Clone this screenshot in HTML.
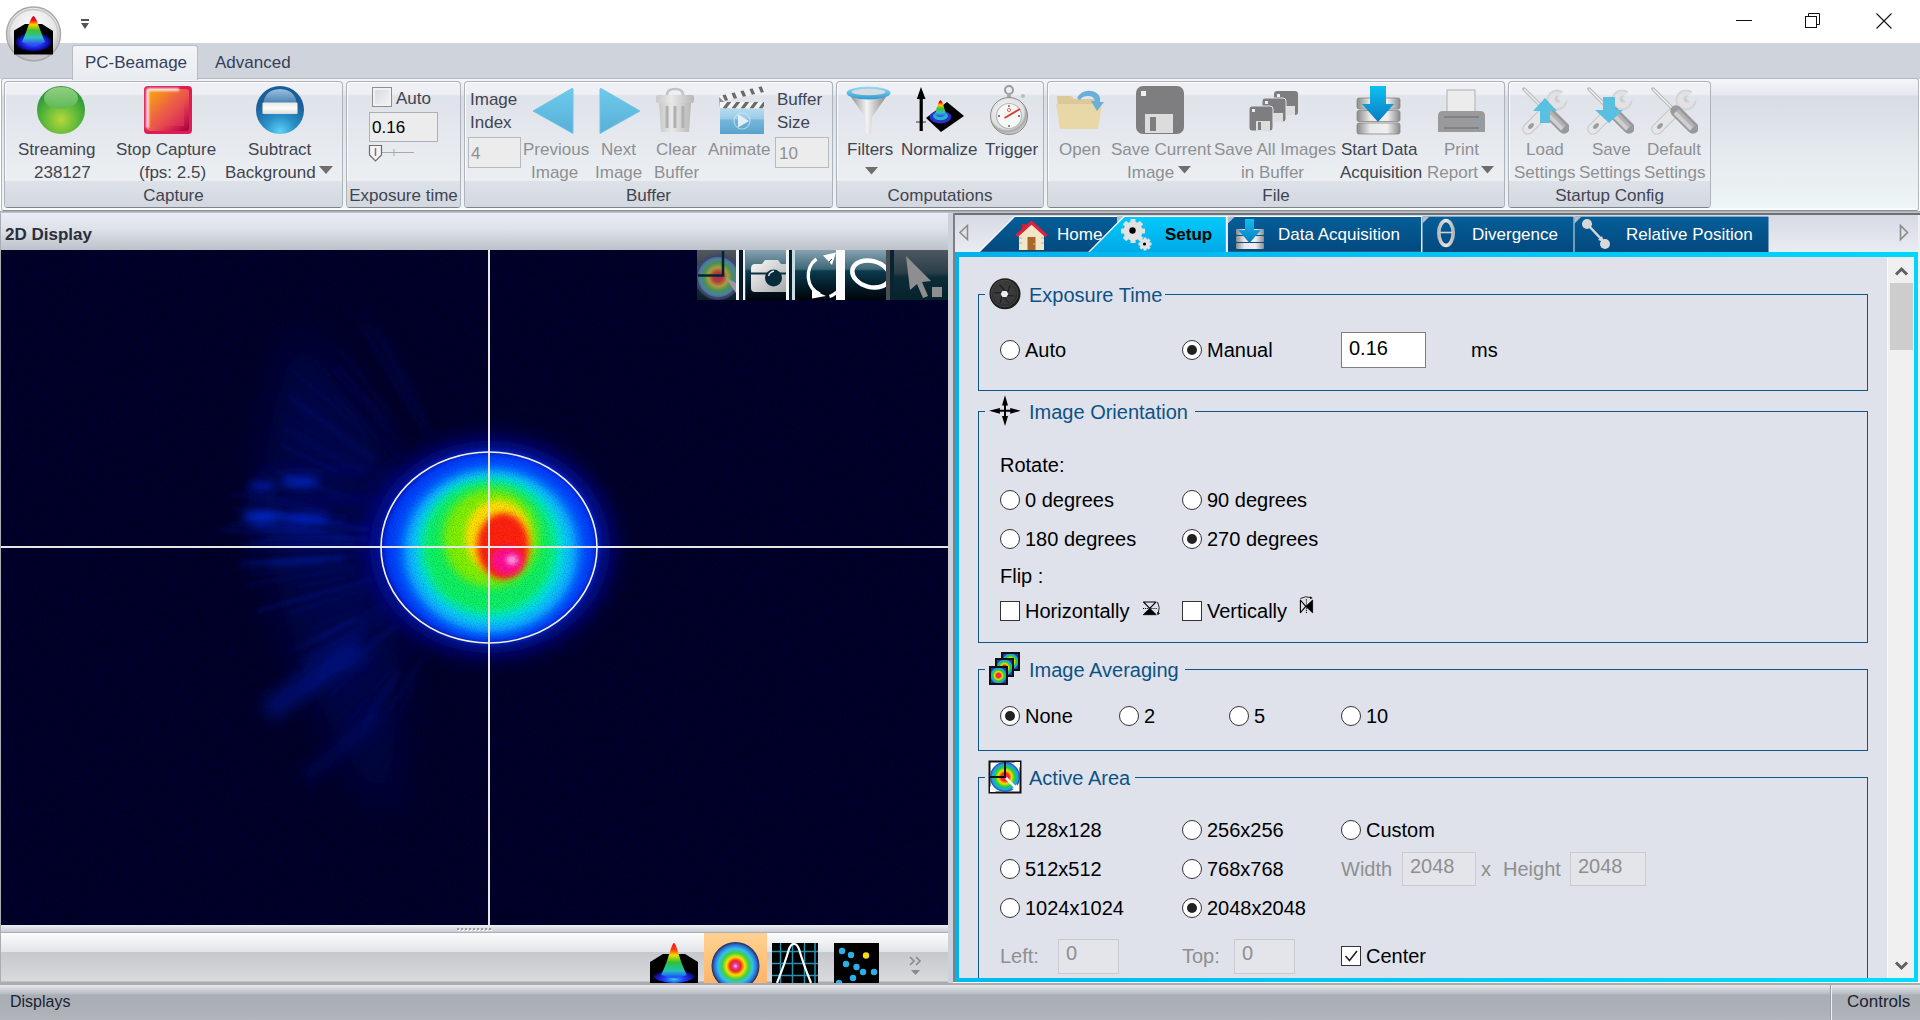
<!DOCTYPE html>
<html><head><meta charset="utf-8">
<style>
*{box-sizing:border-box;margin:0;padding:0}
html,body{width:1920px;height:1020px;overflow:hidden;background:#fff;font-family:"Liberation Sans",sans-serif;color:#3f4550}
.a{position:absolute}
.t{position:absolute;white-space:nowrap;font-size:17px;line-height:20px}
#title{left:0;top:0;width:1920px;height:43px;background:#fff}
#tabstrip{left:0;top:43px;width:1920px;height:36px;background:#cfd3dc}
#ribbon{left:1px;top:78px;width:1918px;height:133px;background:linear-gradient(#f4f6f9 0,#e4e8ee 16px,#d7dce5 17px,#e4e9ee 70px,#eef5f5 129px,#fff 130px,#fff 131px);border:1px solid #b4b8be;border-bottom-color:#8a8e96;border-radius:3px}
.grp{position:absolute;top:81px;height:127px;border:1px solid #aeb2ba;border-bottom-color:#7e8288;border-radius:4px;background:linear-gradient(#eef0f5 0px,#eef0f5 12px,#dfe3ea 14px,#e6e9ee 60px,#ecefF2 100px);box-shadow:inset 1px 1px 0 #fafbfc}
.grp .lbl{position:absolute;left:0;right:0;bottom:0;height:26px;padding-top:3px;background:linear-gradient(#dde1e8,#d3d7df);text-align:center;font-size:17px;line-height:24px;color:#3f4550;border-radius:0 0 3px 3px}
.dis{color:#8e9094}
</style></head><body>
<div id="title" class="a"></div>
<div id="tabstrip" class="a"></div>
<div id="ribbon" class="a"></div>
<!-- title bar content -->
<svg class="a" style="left:0;top:0" width="70" height="70" viewBox="0 0 70 70">
<defs>
<radialGradient id="lgc" cx="0.5" cy="0.35" r="0.6"><stop offset="0" stop-color="#ffffff"/><stop offset="0.7" stop-color="#e4e4e4"/><stop offset="1" stop-color="#bdbdbd"/></radialGradient>
<radialGradient id="cone" cx="0.5" cy="0.5" r="0.5"><stop offset="0" stop-color="#30c8d8"/><stop offset="0.4" stop-color="#2a40ff"/><stop offset="0.8" stop-color="#1010b0"/><stop offset="1" stop-color="#000"/></radialGradient>
<linearGradient id="conek" x1="0" y1="0" x2="0" y2="1"><stop offset="0" stop-color="#c00040"/><stop offset="0.15" stop-color="#ff1010"/><stop offset="0.3" stop-color="#ffd000"/><stop offset="0.5" stop-color="#40c030"/><stop offset="0.75" stop-color="#30c0c0"/><stop offset="1" stop-color="#3040ff"/></linearGradient>
</defs>
<circle cx="33.5" cy="34" r="27" fill="url(#lgc)" stroke="#a8a8a8" stroke-width="1.4"/>
<circle cx="33.5" cy="34" r="24.5" fill="none" stroke="#c8c8c8" stroke-width="1.5"/>
<path d="M14 30.5 L25 24 L42 24 L53 31 L53 54.5 L14 54.5 Z" fill="#000"/>
<ellipse cx="33.5" cy="42" rx="19" ry="10" fill="url(#cone)"/>
<path d="M33.5 16 C30.5 17 28 28 22 42 Q33.5 48 45 42 C39 28 36.5 17 33.5 16 Z" fill="url(#conek)"/>
</svg>
<svg class="a" style="left:78px;top:16px" width="14" height="16"><rect x="3" y="3" width="8" height="2" fill="#555"/><path d="M3 7 L11 7 L7 13 Z" fill="#555"/></svg>
<div class="a" style="left:1736px;top:20px;width:16px;height:1px;background:#111"></div>
<svg class="a" style="left:1803px;top:11px" width="20" height="20"><rect x="2.5" y="5.5" width="11" height="11" fill="none" stroke="#111" stroke-width="1"/><path d="M5.5 5.5 V2.5 H16.5 V13.5 H13.5" fill="none" stroke="#111" stroke-width="1"/></svg>
<svg class="a" style="left:1874px;top:11px" width="20" height="20"><path d="M2.5 2.5 L17.5 17.5 M17.5 2.5 L2.5 17.5" stroke="#111" stroke-width="1.1"/></svg>
<!-- ribbon tabs -->
<div class="a" style="left:72px;top:45px;width:126px;height:35px;background:linear-gradient(#f3f5f8,#e8ebf0);border:1px solid #b8bcc4;border-bottom:none;border-radius:3px 3px 0 0"></div>
<div class="t" style="left:85px;top:53px;color:#34405a">PC-Beamage</div>
<div class="t" style="left:215px;top:53px;color:#34405a">Advanced</div>

<div class="grp" style="left:4px;width:339px"><div class="lbl">Capture</div></div>
<div class="grp" style="left:346px;width:115px"><div class="lbl">Exposure time</div></div>
<div class="grp" style="left:464px;width:369px"><div class="lbl">Buffer</div></div>
<div class="grp" style="left:836px;width:208px"><div class="lbl">Computations</div></div>
<div class="grp" style="left:1047px;width:458px"><div class="lbl">File</div></div>
<div class="grp" style="left:1508px;width:203px"><div class="lbl">Startup Config</div></div>


<!-- ===== RIBBON CONTENT ===== -->
<svg width="0" height="0" style="position:absolute">
<defs>
<radialGradient id="gball" cx="0.5" cy="0.7" r="0.6"><stop offset="0" stop-color="#b6d83a"/><stop offset="0.6" stop-color="#5cb83a"/><stop offset="1" stop-color="#2f9a3c"/></radialGradient>
<linearGradient id="gballhi" x1="0" y1="0" x2="0" y2="1"><stop offset="0" stop-color="#a8d890"/><stop offset="1" stop-color="#5ab85a"/></linearGradient>
<linearGradient id="rsq" x1="0" y1="0" x2="1" y2="1"><stop offset="0" stop-color="#f58a1e"/><stop offset="0.55" stop-color="#e8364a"/><stop offset="1" stop-color="#d01050"/></linearGradient>
<radialGradient id="bball" cx="0.5" cy="0.75" r="0.65"><stop offset="0" stop-color="#36b4e8"/><stop offset="0.7" stop-color="#2a7ab8"/><stop offset="1" stop-color="#1c5c98"/></radialGradient>
<linearGradient id="arr" x1="0" y1="0" x2="0" y2="1"><stop offset="0" stop-color="#6ccbeb"/><stop offset="1" stop-color="#5aaed8"/></linearGradient>
<linearGradient id="silv" x1="0" y1="0" x2="1" y2="0"><stop offset="0" stop-color="#c8c8c8"/><stop offset="0.4" stop-color="#e8e8e8"/><stop offset="1" stop-color="#b8b8b8"/></linearGradient>
<linearGradient id="clap" x1="0" y1="0" x2="0" y2="1"><stop offset="0" stop-color="#8fd0ee"/><stop offset="0.5" stop-color="#4aa8d8"/><stop offset="1" stop-color="#3a8cc0"/></linearGradient>
<linearGradient id="funrim" x1="0" y1="0" x2="0" y2="1"><stop offset="0" stop-color="#9adcf6"/><stop offset="1" stop-color="#2a9ad6"/></linearGradient>
<linearGradient id="funbody" x1="0" y1="0" x2="1" y2="0"><stop offset="0" stop-color="#909090"/><stop offset="0.45" stop-color="#f4f4f4"/><stop offset="1" stop-color="#8a8a8a"/></linearGradient>
<radialGradient id="watch" cx="0.45" cy="0.4" r="0.6"><stop offset="0" stop-color="#fafafa"/><stop offset="0.75" stop-color="#e0e0e0"/><stop offset="0.85" stop-color="#a8a8a8"/><stop offset="1" stop-color="#d0d0d0"/></radialGradient>
<linearGradient id="disk" x1="0" y1="0" x2="1" y2="0"><stop offset="0" stop-color="#8a8a8a"/><stop offset="0.3" stop-color="#e8e8e8"/><stop offset="0.7" stop-color="#f0f0f0"/><stop offset="1" stop-color="#8a8a8a"/></linearGradient>
<linearGradient id="darr" x1="0" y1="0" x2="0" y2="1"><stop offset="0" stop-color="#10c0f0"/><stop offset="1" stop-color="#0a7ac0"/></linearGradient>
</defs></svg>

<!-- Capture -->
<svg class="a" style="left:36px;top:85px" width="50" height="50"><circle cx="25" cy="25" r="24" fill="url(#gball)"/><ellipse cx="25" cy="13" rx="17" ry="11" fill="url(#gballhi)" opacity="0.85"/></svg>
<svg class="a" style="left:143px;top:85px" width="50" height="50"><defs><linearGradient id="rsq2" x1="0.1" y1="0.1" x2="0.9" y2="0.9"><stop offset="0" stop-color="#f8961a"/><stop offset="0.5" stop-color="#ea5a48"/><stop offset="1" stop-color="#e23658"/></linearGradient><linearGradient id="rbev" x1="0" y1="0" x2="1" y2="1"><stop offset="0.55" stop-color="#d81450" stop-opacity="0"/><stop offset="1" stop-color="#9a0038"/></linearGradient><filter id="hb" x="-20%" y="-20%" width="140%" height="140%"><feGaussianBlur stdDeviation="0.9"/></filter></defs><rect x="1" y="1" width="48" height="48" rx="4" fill="#de1c56"/><rect x="4" y="4" width="42" height="42" rx="3" fill="url(#rsq2)"/><rect x="4" y="4" width="42" height="42" rx="3" fill="url(#rbev)"/><rect x="8" y="8" width="33" height="33" fill="url(#rsq2)" opacity="0.6"/><path d="M4.5 43 V6 Q4.5 4.5 6 4.5 H36" fill="none" stroke="#fff" stroke-width="3" opacity="0.85" filter="url(#hb)"/></svg>
<svg class="a" style="left:255px;top:85px" width="50" height="50"><defs><radialGradient id="bb2" cx="0.5" cy="0.95" r="0.7"><stop offset="0" stop-color="#60d0fa"/><stop offset="0.45" stop-color="#2a90c8"/><stop offset="1" stop-color="#1a5e98"/></radialGradient><linearGradient id="bbh" x1="0" y1="0" x2="0" y2="1"><stop offset="0" stop-color="#a8cce6"/><stop offset="1" stop-color="#4a82b4"/></linearGradient><linearGradient id="bar2" x1="0" y1="0" x2="0" y2="1"><stop offset="0" stop-color="#e8e8e6"/><stop offset="0.5" stop-color="#fcfcfa"/><stop offset="1" stop-color="#dcdcda"/></linearGradient></defs><circle cx="25" cy="25" r="24" fill="url(#bb2)"/><path d="M8.5 19 Q9 5 25 4 Q41 5 41.5 19 Z" fill="url(#bbh)" opacity="0.9"/><rect x="7.5" y="17.5" width="35" height="11.5" rx="1" fill="url(#bar2)"/></svg>
<div class="t" style="left:18px;top:140px">Streaming</div>
<div class="t" style="left:34px;top:163px">238127</div>
<div class="t" style="left:116px;top:140px">Stop Capture</div>
<div class="t" style="left:139px;top:163px">(fps: 2.5)</div>
<div class="t" style="left:248px;top:140px">Subtract</div>
<div class="t" style="left:225px;top:163px">Background</div>
<svg class="a" style="left:319px;top:166px" width="14" height="9"><path d="M0 0 H14 L7 8 Z" fill="#6e6e6e"/></svg>

<!-- Exposure time -->
<div class="a" style="left:372px;top:87px;width:20px;height:20px;border:1px solid #8f8f8f;background:linear-gradient(135deg,#d4d8de,#f4f5f7);box-shadow:inset 0 0 0 2px #f0f1f3"></div>
<div class="t" style="left:396px;top:89px">Auto</div>
<div class="a" style="left:369px;top:112px;width:69px;height:30px;border:1px solid #adb0b5;background:#ececed"></div>
<div class="t" style="left:372px;top:118px;color:#000">0.16</div>
<svg class="a" style="left:368px;top:144px" width="50" height="19"><path d="M14 8.5 H46" stroke="#a9a9a9" stroke-width="1"/><path d="M26 5 V12" stroke="#a9a9a9"/><path d="M1.5 1.5 H13.5 V11 L7.5 17 L1.5 11 Z" fill="#f4f4f4" stroke="#6d6d6d" stroke-width="1.2"/><path d="M7.5 4 V12" stroke="#777" stroke-width="1.5"/></svg>

<!-- Buffer -->
<div class="t" style="left:470px;top:90px">Image</div>
<div class="t" style="left:470px;top:113px">Index</div>
<div class="a" style="left:468px;top:137px;width:53px;height:31px;border:1px solid #b6b9be;background:#ececed"></div>
<div class="t dis" style="left:471px;top:144px">4</div>
<svg class="a" style="left:530px;top:86px" width="46" height="50"><path d="M3 25 L42 2.5 Q43 2 43 4 L43 47.5 L3 25 Z" fill="url(#arr)" stroke="#6cc4e8" stroke-width="1" stroke-linejoin="round"/></svg>
<svg class="a" style="left:598px;top:86px" width="46" height="50"><path d="M42 25 L3 2.5 Q2 2 2 4 L2 47.5 L42 25 Z" fill="url(#arr)" stroke="#6cc4e8" stroke-width="1" stroke-linejoin="round"/></svg>
<svg class="a" style="left:654px;top:86px" width="42" height="50"><path d="M13 9 Q13 3 21 3 Q29 3 29 9" fill="none" stroke="#c4c4c4" stroke-width="2.5"/><rect x="2" y="9" width="38" height="8" rx="2" fill="url(#silv)"/><path d="M5 17 H37 L35 46 H7 Z" fill="url(#silv)"/><path d="M13 20 V42 M21 20 V42 M29 20 V42" stroke="#b0b0b0" stroke-width="3"/></svg>
<svg class="a" style="left:710px;top:82px" width="60" height="56" viewBox="710 82 60 56"><defs><clipPath id="arm"><path d="M719 96 L763 86 L764 92 L720 102 Z"/></clipPath><clipPath id="bar"><rect x="720" y="102" width="44" height="6.5"/></clipPath><linearGradient id="clb" x1="0" y1="0" x2="0" y2="1"><stop offset="0" stop-color="#b6dcee"/><stop offset="0.4" stop-color="#9ccbe6"/><stop offset="0.45" stop-color="#74b6dc"/><stop offset="1" stop-color="#5aa2cc"/></linearGradient></defs>
<path d="M719 96 L763 86 L764 92 L720 102 Z" fill="#f2f2f2"/>
<g clip-path="url(#arm)" stroke="#6a6a6a" stroke-width="3.2"><path d="M722 90 L728 104 M731 88 L737 102 M740 86 L746 100 M749 84 L755 98 M758 82 L764 96"/></g>
<path d="M719 97 L720 108.5 L731 108.5 Z" fill="#8a8a8a"/>
<rect x="720" y="102" width="44" height="6.5" fill="#f4f4f4"/>
<g clip-path="url(#bar)" stroke="#6a6a6a" stroke-width="3.2"><path d="M724 109 L730 101 M733 109 L739 101 M742 109 L748 101 M751 109 L757 101 M760 109 L766 101"/></g>
<rect x="720" y="108.5" width="44" height="25.5" fill="url(#clb)"/>
<circle cx="742" cy="121" r="8" fill="none" stroke="#d8eef8" stroke-width="1.2" opacity="0.6"/>
<path d="M738 114.5 L749 121 L738 127.5 Z" fill="#eef6fa" opacity="0.9"/>
</svg>
<div class="t dis" style="left:523px;top:140px">Previous</div>
<div class="t dis" style="left:531px;top:163px">Image</div>
<div class="t dis" style="left:601px;top:140px">Next</div>
<div class="t dis" style="left:595px;top:163px">Image</div>
<div class="t dis" style="left:656px;top:140px">Clear</div>
<div class="t dis" style="left:654px;top:163px">Buffer</div>
<div class="t dis" style="left:708px;top:140px">Animate</div>
<div class="t" style="left:777px;top:90px">Buffer</div>
<div class="t" style="left:777px;top:113px">Size</div>
<div class="a" style="left:775px;top:137px;width:54px;height:31px;border:1px solid #b6b9be;background:#ececed"></div>
<div class="t dis" style="left:779px;top:144px">10</div>

<!-- Computations -->
<svg class="a" style="left:844px;top:85px" width="48" height="50"><path d="M7 12 L21 32 L22 48 L27 48 L28 32 L42 12 Z" fill="url(#funbody)"/><ellipse cx="24.5" cy="8" rx="22" ry="6.5" fill="url(#funrim)"/><ellipse cx="24.5" cy="7" rx="17" ry="3.2" fill="#d8dcde"/></svg>
<svg class="a" style="left:912px;top:86px" width="54" height="48" viewBox="912 86 54 48"><path d="M916 122 H926" stroke="#333" stroke-width="1"/><path d="M921 87 L925.5 99 H922.8 V131 H919.6 V99 H916.8 Z" fill="#000"/><path d="M926 118 L947 102 L964 116 L941 132 Z" fill="#000"/><ellipse cx="940.5" cy="117" rx="11" ry="6.5" fill="#3030c8"/><ellipse cx="940.5" cy="116" rx="7.5" ry="4.2" fill="#20b8c8"/><path d="M940.5 100 Q938 101 935 115 Q940.5 119 946 115 Q943 101 940.5 100 Z" fill="url(#conek)"/></svg>
<svg class="a" style="left:989px;top:85px" width="42" height="50"><circle cx="20" cy="5" r="4" fill="none" stroke="#9a9a9a" stroke-width="2"/><rect x="18" y="8" width="4" height="6" fill="#aaa"/><circle cx="34" cy="11" r="2" fill="#bbb"/><circle cx="20" cy="31" r="18.5" fill="url(#watch)" stroke="#8a8a8a" stroke-width="1"/><circle cx="20" cy="31" r="12.5" fill="#f6f8f8" stroke="#b8b8b8" stroke-width="1.2"/><path d="M20 20 V22 M20 40 V42 M9 31 H11 M29 31 H31" stroke="#555" stroke-width="1.3"/><circle cx="20" cy="25" r="1.6" fill="none" stroke="#e04040" stroke-width="0.8"/><path d="M15.5 33 L31 24" stroke="#e23a2a" stroke-width="1.8"/></svg>
<div class="t" style="left:847px;top:140px">Filters</div>
<svg class="a" style="left:865px;top:167px" width="14" height="9"><path d="M0 0 H13 L6.5 7.5 Z" fill="#6e6e6e"/></svg>
<div class="t" style="left:901px;top:140px">Normalize</div>
<div class="t" style="left:985px;top:140px">Trigger</div>

<!-- File -->
<svg class="a" style="left:1055px;top:86px" width="52" height="46"><path d="M2 10 H16 L19 13 H42 V43 H5 Z" fill="#dcc99a"/><path d="M1 18 H47 L43 43 H5 Z" fill="#e8d8a8"/><path d="M22 12 Q28 2 40 6 Q46 9 45 16 L49 16 L42 25 L36 15 L40 15 Q39 10 33 10 Q27 10 25 14 Z" fill="#6aaedc"/></svg>
<svg class="a" style="left:1135px;top:85px" width="50" height="50"><rect x="1" y="1" width="48" height="48" rx="7" fill="#7e7e80"/><rect x="6" y="6" width="5" height="5" fill="#f0f0f0"/><rect x="10" y="29" width="28" height="19" fill="#dcdcdc"/><rect x="15" y="32" width="6" height="14" fill="#7e7e80"/></svg>
<svg class="a" style="left:1248px;top:91px" width="52" height="42"><g id="fl"><rect x="26" y="0" width="24" height="24" rx="3" fill="#7e7e80"/><rect x="29" y="3" width="3" height="3" fill="#eee"/><rect x="33" y="15" width="14" height="9" fill="#ddd"/></g><rect x="14" y="7" width="24" height="24" rx="3" fill="#7e7e80" stroke="#e2e5ea" stroke-width="1"/><rect x="17" y="10" width="3" height="3" fill="#eee"/><rect x="21" y="22" width="14" height="9" fill="#ddd"/><rect x="1" y="15" width="24" height="25" rx="3" fill="#7e7e80" stroke="#e2e5ea" stroke-width="1"/><rect x="4" y="18" width="3" height="3" fill="#eee"/><rect x="8" y="30" width="14" height="10" fill="#ddd"/><rect x="10" y="31" width="3" height="8" fill="#7e7e80"/></svg>
<svg class="a" style="left:1356px;top:85px" width="46" height="50"><rect x="1" y="13" width="43" height="11" rx="2" fill="url(#disk)" stroke="#888" stroke-width="0.8"/><rect x="1" y="25.5" width="43" height="11" rx="2" fill="url(#disk)" stroke="#888" stroke-width="0.8"/><rect x="1" y="38" width="43" height="11" rx="2" fill="url(#disk)" stroke="#888" stroke-width="0.8"/><path d="M14 1 H30 V19 H38 L22 37 L6 19 H14 Z" fill="url(#darr)"/></svg>
<svg class="a" style="left:1437px;top:89px" width="50" height="46"><rect x="10" y="1" width="28" height="24" fill="#ececec" stroke="#b0b0b0"/><path d="M1 27 Q1 22 6 22 H43 Q48 22 48 27 V43 H1 Z" fill="#9a9a9c"/><path d="M7 28 H42 M7 39 H42" stroke="#6a6a6a" stroke-width="1.2"/><circle cx="42" cy="33" r="1.5" fill="#5ab0e8"/></svg>
<div class="t dis" style="left:1059px;top:140px">Open</div>
<div class="t dis" style="left:1111px;top:140px">Save Current</div>
<div class="t dis" style="left:1127px;top:163px">Image</div>
<svg class="a" style="left:1178px;top:166px" width="14" height="9"><path d="M0 0 H13 L6.5 7.5 Z" fill="#6e6e6e"/></svg>
<div class="t dis" style="left:1214px;top:140px">Save All Images</div>
<div class="t dis" style="left:1241px;top:163px">in Buffer</div>
<div class="t" style="left:1341px;top:140px">Start Data</div>
<div class="t" style="left:1340px;top:163px">Acquisition</div>
<div class="t dis" style="left:1444px;top:140px">Print</div>
<div class="t dis" style="left:1427px;top:163px">Report</div>
<svg class="a" style="left:1481px;top:166px" width="14" height="9"><path d="M0 0 H13 L6.5 7.5 Z" fill="#6e6e6e"/></svg>

<!-- Startup config -->
<svg width="0" height="0" style="position:absolute"><defs>
<g id="tools"><linearGradient id="hdl" x1="0" y1="0" x2="1" y2="-1" gradientUnits="objectBoundingBox"><stop offset="0" stop-color="#8e8e90"/><stop offset="0.5" stop-color="#e4e4e6"/><stop offset="1" stop-color="#9a9a9c"/></linearGradient>
<mask id="wm"><rect x="0" y="0" width="48" height="50" fill="#fff"/><path d="M36 12 L46 2 L52 8 L42 18 Z" fill="#000"/></mask><g mask="url(#wm)"><circle cx="36" cy="14" r="10.5" fill="#d4d4d6"/><circle cx="36" cy="14" r="8.5" fill="#e2e2e4"/><circle cx="37" cy="13" r="3.5" fill="#cfcfd1"/></g><path d="M30 20 L24 26" stroke="#d8d8da" stroke-width="8"/>
<path d="M24 26 L7 43" stroke="#c8c8ca" stroke-width="11.5" stroke-linecap="round"/><path d="M24 26 L7 43" stroke="#e6e6e8" stroke-width="9.5" stroke-linecap="round"/>
<ellipse cx="10" cy="40" rx="2" ry="3.5" transform="rotate(45 10 40)" fill="#9c9c9e"/>
<path d="M3 3 L24 24" stroke="#b8b8ba" stroke-width="3.5" stroke-linecap="round"/><path d="M3 3 L24 24" stroke="#f0f0f2" stroke-width="1.5"/>
<path d="M26 25 L43 42" stroke="#9a9a9c" stroke-width="11.5" stroke-linecap="round"/><path d="M25 26.5 L41.5 43" stroke="#d0d0d2" stroke-width="4"/><path d="M27.5 24 L44 40.5" stroke="#b4b4b6" stroke-width="2.5"/></g>
</defs></svg>
<svg class="a" style="left:1521px;top:86px" width="48" height="50"><use href="#tools"/><path d="M12 25 L24 12 L36 25 H29 V37 H19 V25 Z" fill="#5ac0e2"/></svg>
<svg class="a" style="left:1586px;top:86px" width="48" height="50"><use href="#tools"/><path d="M17 11 H29 V24 H37 L23 37 L9 24 H17 Z" fill="#5ac0e2"/></svg>
<svg class="a" style="left:1650px;top:86px" width="48" height="50"><use href="#tools"/></svg>
<div class="t dis" style="left:1526px;top:140px">Load</div>
<div class="t dis" style="left:1514px;top:163px">Settings</div>
<div class="t dis" style="left:1592px;top:140px">Save</div>
<div class="t dis" style="left:1579px;top:163px">Settings</div>
<div class="t dis" style="left:1647px;top:140px">Default</div>
<div class="t dis" style="left:1644px;top:163px">Settings</div>

<!-- left panel -->
<div class="a" style="left:0;top:211px;width:1920px;height:772px;background:#cfd3db"></div><div class="a" style="left:0;top:211px;width:1920px;height:2px;background:linear-gradient(#a2a6ae,#c6cad2)"></div>
<div class="a" style="left:0;top:213px;width:1px;height:770px;background:#a9adb3"></div>
<div class="a" style="left:1px;top:213px;width:947px;height:37px;background:linear-gradient(#e9edf5,#dde1e9 45%,#bcc1ca)"></div>
<div class="t" style="left:5px;top:225px;font-weight:bold;color:#2a2e38">2D Display</div>
<svg class="a" style="left:1px;top:250px" width="947" height="675" viewBox="1 250 947 675">
<defs>
<filter id="b20" x="-50%" y="-50%" width="200%" height="200%"><feGaussianBlur stdDeviation="20"/></filter>
<filter id="b12" x="-50%" y="-50%" width="200%" height="200%"><feGaussianBlur stdDeviation="12"/></filter>
<filter id="b8" x="-50%" y="-50%" width="200%" height="200%"><feGaussianBlur stdDeviation="8"/></filter>
<filter id="b5" x="-50%" y="-50%" width="200%" height="200%"><feGaussianBlur stdDeviation="5"/></filter>
<filter id="b3" x="-50%" y="-50%" width="200%" height="200%"><feGaussianBlur stdDeviation="3"/></filter>
<filter id="b2" x="-50%" y="-50%" width="200%" height="200%"><feGaussianBlur stdDeviation="2"/></filter>
</defs>
<filter id="nz" x="0" y="0" width="100%" height="100%"><feTurbulence type="fractalNoise" baseFrequency="0.55" numOctaves="2" seed="4"/><feColorMatrix values="0 0 0 0 0  0 0 0 0 0  0 0 0 0.9 -0.25  0 0 0 0 1"/></filter>
<rect x="1" y="250" width="947" height="675" fill="#00001c"/>
<rect x="1" y="250" width="947" height="675" filter="url(#nz)" opacity="0.14"/>
<!-- faint fan left -->
<g filter="url(#b20)" opacity="0.45"><path d="M300 330 L400 470 L400 620 L390 820 Q200 560 300 330 Z" fill="#00086a"/></g>
<g filter="url(#b2)" opacity="0.45"><line x1="374.5" y1="590.3" x2="276.6" y2="627.0" stroke="#0830f0" stroke-width="2.6" opacity="0.12"/><line x1="375.9" y1="578.0" x2="276.8" y2="604.9" stroke="#0830f0" stroke-width="2.4" opacity="0.18"/><line x1="417.9" y1="642.9" x2="367.1" y2="710.5" stroke="#0830f0" stroke-width="1.7" opacity="0.18"/><line x1="365.2" y1="629.4" x2="288.2" y2="680.2" stroke="#0830f0" stroke-width="2.3" opacity="0.25"/><line x1="436.6" y1="442.3" x2="365.4" y2="302.9" stroke="#0830f0" stroke-width="1.8" opacity="0.10"/><line x1="399.9" y1="643.4" x2="333.0" y2="714.9" stroke="#0830f0" stroke-width="2.7" opacity="0.09"/><line x1="362.5" y1="501.1" x2="257.7" y2="463.5" stroke="#0830f0" stroke-width="1.6" opacity="0.19"/><line x1="366.1" y1="635.8" x2="319.4" y2="669.3" stroke="#0830f0" stroke-width="2.7" opacity="0.18"/><line x1="358.8" y1="556.2" x2="249.1" y2="563.8" stroke="#0830f0" stroke-width="2.0" opacity="0.43"/><line x1="349.0" y1="518.2" x2="230.5" y2="494.1" stroke="#0830f0" stroke-width="2.1" opacity="0.45"/><line x1="435.7" y1="438.3" x2="379.3" y2="325.3" stroke="#0830f0" stroke-width="1.8" opacity="0.17"/><line x1="372.8" y1="545.8" x2="239.8" y2="544.4" stroke="#0830f0" stroke-width="2.6" opacity="0.46"/><line x1="405.1" y1="445.6" x2="322.0" y2="346.3" stroke="#0830f0" stroke-width="2.7" opacity="0.14"/><line x1="329.1" y1="557.1" x2="239.9" y2="562.8" stroke="#0830f0" stroke-width="2.8" opacity="0.35"/><line x1="400.2" y1="671.6" x2="362.8" y2="723.5" stroke="#0830f0" stroke-width="3.1" opacity="0.20"/><line x1="367.1" y1="605.8" x2="284.8" y2="645.2" stroke="#0830f0" stroke-width="2.4" opacity="0.11"/><line x1="397.6" y1="625.9" x2="348.2" y2="668.0" stroke="#0830f0" stroke-width="1.8" opacity="0.17"/><line x1="372.2" y1="615.9" x2="284.4" y2="667.2" stroke="#0830f0" stroke-width="2.4" opacity="0.12"/><line x1="328.1" y1="523.3" x2="231.9" y2="509.2" stroke="#0830f0" stroke-width="2.1" opacity="0.50"/><line x1="356.9" y1="567.7" x2="247.5" y2="584.7" stroke="#0830f0" stroke-width="1.8" opacity="0.53"/><line x1="391.3" y1="628.2" x2="337.7" y2="672.3" stroke="#0830f0" stroke-width="2.7" opacity="0.22"/><line x1="388.6" y1="601.7" x2="303.8" y2="647.6" stroke="#0830f0" stroke-width="2.6" opacity="0.20"/><line x1="413.5" y1="414.5" x2="363.5" y2="328.0" stroke="#0830f0" stroke-width="2.9" opacity="0.15"/><line x1="395.9" y1="681.9" x2="361.1" y2="731.7" stroke="#0830f0" stroke-width="3.1" opacity="0.18"/><line x1="355.9" y1="574.9" x2="296.5" y2="587.3" stroke="#0830f0" stroke-width="1.6" opacity="0.41"/><line x1="414.6" y1="648.5" x2="377.4" y2="698.5" stroke="#0830f0" stroke-width="1.6" opacity="0.11"/><line x1="432.0" y1="655.9" x2="404.2" y2="708.1" stroke="#0830f0" stroke-width="1.6" opacity="0.11"/><line x1="394.2" y1="433.2" x2="342.6" y2="371.9" stroke="#0830f0" stroke-width="2.2" opacity="0.10"/><line x1="372.6" y1="579.3" x2="257.3" y2="611.0" stroke="#0830f0" stroke-width="2.4" opacity="0.55"/><line x1="370.3" y1="547.1" x2="288.9" y2="547.2" stroke="#0830f0" stroke-width="2.0" opacity="0.30"/><line x1="401.0" y1="460.8" x2="331.8" y2="393.8" stroke="#0830f0" stroke-width="2.6" opacity="0.19"/><line x1="384.5" y1="646.2" x2="356.2" y2="672.8" stroke="#0830f0" stroke-width="3.5" opacity="0.13"/><line x1="388.4" y1="432.2" x2="334.1" y2="370.7" stroke="#0830f0" stroke-width="1.8" opacity="0.11"/><line x1="374.5" y1="460.5" x2="278.5" y2="388.8" stroke="#0830f0" stroke-width="1.9" opacity="0.19"/><line x1="364.0" y1="434.1" x2="289.3" y2="367.1" stroke="#0830f0" stroke-width="3.1" opacity="0.17"/><line x1="382.7" y1="478.1" x2="281.7" y2="413.2" stroke="#0830f0" stroke-width="1.6" opacity="0.19"/><line x1="421.7" y1="658.1" x2="388.9" y2="711.4" stroke="#0830f0" stroke-width="3.4" opacity="0.16"/><line x1="324.0" y1="560.8" x2="238.0" y2="568.0" stroke="#0830f0" stroke-width="2.2" opacity="0.53"/><line x1="384.0" y1="617.9" x2="326.5" y2="656.4" stroke="#0830f0" stroke-width="2.7" opacity="0.16"/><line x1="393.5" y1="417.8" x2="340.7" y2="347.2" stroke="#0830f0" stroke-width="3.1" opacity="0.15"/><line x1="395.1" y1="664.9" x2="343.1" y2="729.4" stroke="#0830f0" stroke-width="3.0" opacity="0.17"/><line x1="365.2" y1="548.8" x2="247.9" y2="550.4" stroke="#0830f0" stroke-width="3.1" opacity="0.29"/><line x1="426.6" y1="425.8" x2="375.7" y2="328.6" stroke="#0830f0" stroke-width="2.9" opacity="0.19"/><line x1="396.9" y1="625.8" x2="343.4" y2="671.0" stroke="#0830f0" stroke-width="3.1" opacity="0.19"/><line x1="373.2" y1="657.0" x2="314.7" y2="712.1" stroke="#0830f0" stroke-width="2.2" opacity="0.15"/><line x1="369.1" y1="529.5" x2="279.7" y2="516.6" stroke="#0830f0" stroke-width="2.8" opacity="0.54"/><line x1="324.4" y1="531.3" x2="253.9" y2="524.7" stroke="#0830f0" stroke-width="3.2" opacity="0.50"/><line x1="384.4" y1="620.9" x2="324.4" y2="662.9" stroke="#0830f0" stroke-width="2.7" opacity="0.16"/><line x1="369.0" y1="613.5" x2="319.8" y2="640.6" stroke="#0830f0" stroke-width="2.2" opacity="0.33"/><line x1="343.2" y1="555.6" x2="242.2" y2="561.5" stroke="#0830f0" stroke-width="3.3" opacity="0.33"/><line x1="345.9" y1="541.4" x2="248.3" y2="537.7" stroke="#0830f0" stroke-width="2.4" opacity="0.17"/><line x1="399.9" y1="618.8" x2="309.1" y2="691.2" stroke="#0830f0" stroke-width="2.4" opacity="0.15"/><line x1="365.0" y1="472.4" x2="287.6" y2="426.2" stroke="#0830f0" stroke-width="2.6" opacity="0.23"/><line x1="395.3" y1="472.0" x2="293.0" y2="391.0" stroke="#0830f0" stroke-width="2.1" opacity="0.17"/><line x1="375.6" y1="461.3" x2="289.1" y2="396.4" stroke="#0830f0" stroke-width="3.3" opacity="0.29"/><line x1="341.9" y1="560.6" x2="267.2" y2="567.5" stroke="#0830f0" stroke-width="2.9" opacity="0.36"/><line x1="346.0" y1="557.3" x2="268.1" y2="562.9" stroke="#0830f0" stroke-width="2.9" opacity="0.53"/><line x1="383.2" y1="418.8" x2="339.2" y2="366.0" stroke="#0830f0" stroke-width="3.4" opacity="0.14"/><line x1="404.1" y1="459.6" x2="331.4" y2="385.5" stroke="#0830f0" stroke-width="1.6" opacity="0.12"/><line x1="388.2" y1="608.7" x2="296.8" y2="664.0" stroke="#0830f0" stroke-width="3.3" opacity="0.30"/><line x1="375.7" y1="650.8" x2="325.7" y2="696.2" stroke="#0830f0" stroke-width="3.3" opacity="0.08"/><line x1="430.0" y1="435.0" x2="358.1" y2="300.6" stroke="#0830f0" stroke-width="2.5" opacity="0.12"/><line x1="421.3" y1="401.6" x2="390.6" y2="336.7" stroke="#0830f0" stroke-width="2.5" opacity="0.12"/><line x1="370.8" y1="587.1" x2="292.4" y2="613.5" stroke="#0830f0" stroke-width="1.5" opacity="0.44"/><line x1="352.5" y1="525.4" x2="279.7" y2="514.0" stroke="#0830f0" stroke-width="2.7" opacity="0.29"/><line x1="371.7" y1="539.6" x2="220.7" y2="530.2" stroke="#0830f0" stroke-width="3.4" opacity="0.47"/><line x1="404.3" y1="644.2" x2="369.1" y2="684.1" stroke="#0830f0" stroke-width="2.0" opacity="0.17"/><line x1="393.0" y1="645.4" x2="324.3" y2="715.1" stroke="#0830f0" stroke-width="2.0" opacity="0.17"/><line x1="368.7" y1="659.7" x2="331.4" y2="694.2" stroke="#0830f0" stroke-width="1.7" opacity="0.16"/><line x1="401.5" y1="671.6" x2="371.9" y2="713.5" stroke="#0830f0" stroke-width="3.4" opacity="0.07"/><line x1="339.8" y1="494.7" x2="283.3" y2="475.0" stroke="#0830f0" stroke-width="1.6" opacity="0.49"/><line x1="397.1" y1="442.3" x2="330.7" y2="367.4" stroke="#0830f0" stroke-width="3.4" opacity="0.14"/><line x1="381.9" y1="603.8" x2="296.7" y2="648.5" stroke="#0830f0" stroke-width="1.7" opacity="0.16"/><line x1="401.6" y1="624.8" x2="343.8" y2="675.6" stroke="#0830f0" stroke-width="2.1" opacity="0.10"/><line x1="383.0" y1="471.5" x2="288.2" y2="404.5" stroke="#0830f0" stroke-width="2.2" opacity="0.15"/><line x1="425.0" y1="658.2" x2="400.1" y2="700.7" stroke="#0830f0" stroke-width="2.6" opacity="0.16"/><line x1="378.4" y1="633.4" x2="300.4" y2="693.8" stroke="#0830f0" stroke-width="3.1" opacity="0.13"/><line x1="348.7" y1="563.5" x2="248.6" y2="575.3" stroke="#0830f0" stroke-width="2.5" opacity="0.32"/><line x1="338.1" y1="472.8" x2="278.1" y2="443.5" stroke="#0830f0" stroke-width="2.9" opacity="0.31"/><line x1="360.5" y1="501.4" x2="268.6" y2="469.0" stroke="#0830f0" stroke-width="1.8" opacity="0.19"/><line x1="396.2" y1="671.3" x2="372.8" y2="702.2" stroke="#0830f0" stroke-width="1.7" opacity="0.08"/><line x1="376.2" y1="430.5" x2="308.8" y2="361.4" stroke="#0830f0" stroke-width="2.0" opacity="0.10"/><line x1="362.3" y1="605.1" x2="310.6" y2="628.7" stroke="#0830f0" stroke-width="2.0" opacity="0.21"/><line x1="408.6" y1="399.5" x2="366.8" y2="323.7" stroke="#0830f0" stroke-width="3.4" opacity="0.09"/><line x1="365.5" y1="598.2" x2="315.8" y2="618.7" stroke="#0830f0" stroke-width="2.4" opacity="0.20"/><line x1="364.1" y1="541.8" x2="249.4" y2="537.1" stroke="#0830f0" stroke-width="2.0" opacity="0.17"/><line x1="402.9" y1="652.7" x2="374.0" y2="687.7" stroke="#0830f0" stroke-width="2.1" opacity="0.06"/><line x1="365.4" y1="625.4" x2="306.3" y2="662.7" stroke="#0830f0" stroke-width="2.8" opacity="0.29"/><line x1="348.0" y1="466.2" x2="282.0" y2="428.6" stroke="#0830f0" stroke-width="3.5" opacity="0.18"/><line x1="376.5" y1="652.3" x2="328.2" y2="697.2" stroke="#0830f0" stroke-width="3.2" opacity="0.07"/><line x1="398.3" y1="428.9" x2="327.8" y2="338.1" stroke="#0830f0" stroke-width="1.8" opacity="0.17"/><line x1="347.8" y1="534.5" x2="229.9" y2="524.1" stroke="#0830f0" stroke-width="3.2" opacity="0.47"/><line x1="329.9" y1="510.8" x2="242.7" y2="491.0" stroke="#0830f0" stroke-width="2.0" opacity="0.43"/><line x1="425.2" y1="650.7" x2="384.5" y2="716.0" stroke="#0830f0" stroke-width="3.2" opacity="0.07"/><line x1="342.5" y1="522.3" x2="243.9" y2="505.9" stroke="#0830f0" stroke-width="2.5" opacity="0.43"/><line x1="414.4" y1="686.7" x2="384.6" y2="741.7" stroke="#0830f0" stroke-width="2.6" opacity="0.13"/><line x1="380.3" y1="501.8" x2="250.8" y2="448.5" stroke="#0830f0" stroke-width="1.6" opacity="0.17"/><line x1="353.1" y1="619.8" x2="314.4" y2="640.4" stroke="#0830f0" stroke-width="3.5" opacity="0.29"/><line x1="354.0" y1="544.1" x2="251.1" y2="541.9" stroke="#0830f0" stroke-width="3.0" opacity="0.43"/><line x1="346.2" y1="503.1" x2="281.5" y2="483.3" stroke="#0830f0" stroke-width="2.0" opacity="0.22"/><line x1="379.7" y1="475.0" x2="280.1" y2="410.0" stroke="#0830f0" stroke-width="1.6" opacity="0.11"/><line x1="355.3" y1="617.4" x2="287.7" y2="652.7" stroke="#0830f0" stroke-width="2.1" opacity="0.27"/><line x1="349.8" y1="536.9" x2="251.8" y2="529.9" stroke="#0830f0" stroke-width="3.3" opacity="0.21"/><line x1="354.3" y1="647.4" x2="296.9" y2="689.9" stroke="#0830f0" stroke-width="2.4" opacity="0.11"/><line x1="366.8" y1="432.4" x2="310.3" y2="379.7" stroke="#0830f0" stroke-width="1.9" opacity="0.10"/><line x1="424.9" y1="438.5" x2="357.9" y2="326.9" stroke="#0830f0" stroke-width="2.5" opacity="0.08"/><line x1="428.8" y1="441.1" x2="354.2" y2="312.2" stroke="#0830f0" stroke-width="3.3" opacity="0.13"/><line x1="377.3" y1="487.0" x2="252.1" y2="420.4" stroke="#0830f0" stroke-width="1.5" opacity="0.22"/><line x1="422.3" y1="671.9" x2="393.0" y2="726.0" stroke="#0830f0" stroke-width="1.8" opacity="0.10"/><line x1="364.1" y1="587.8" x2="261.7" y2="621.1" stroke="#0830f0" stroke-width="3.0" opacity="0.17"/></g>
<g filter="url(#b5)" opacity="0.85">
<ellipse cx="262" cy="517" rx="20" ry="5" fill="#0038ff"/>
<ellipse cx="300" cy="482" rx="20" ry="4" fill="#0030f0"/>
<ellipse cx="305" cy="519" rx="24" ry="5" fill="#0028d0"/>
<ellipse cx="262" cy="486" rx="14" ry="4" fill="#0028d8"/>
<path d="M245 500 H380 M250 528 H375 M255 470 H370 M262 540 H370" stroke="#0020b0" stroke-width="2.5" opacity="0.7"/>
</g>
<g filter="url(#b8)" opacity="0.45">
<path d="M262 702 L355 638 L364 654 L272 722 Z" fill="#0020c0"/>
<path d="M300 775 L380 705 L386 716 L306 786 Z" fill="#000c80"/>
</g>
<!-- beam -->
<g filter="url(#b12)"><ellipse cx="490" cy="547" rx="120" ry="106" fill="#0010a8"/></g>
<g filter="url(#b3)"><ellipse cx="490" cy="547" rx="107" ry="95" fill="#0034f8"/></g>
<g filter="url(#b8)"><ellipse cx="491" cy="549" rx="94" ry="86" fill="#0068ff"/></g>
<g filter="url(#b5)"><ellipse cx="491" cy="551" rx="86" ry="81" fill="#10b8ff"/></g>
<g filter="url(#b5)"><ellipse cx="491" cy="549" rx="74" ry="72" fill="#00e8d8"/></g>
<g filter="url(#b5)"><ellipse cx="489" cy="547" rx="66" ry="66" fill="#10f060"/></g>
<g filter="url(#b5)"><ellipse cx="491" cy="538" rx="48" ry="49" fill="#80f000"/></g>
<g filter="url(#b3)"><ellipse cx="498" cy="537" rx="33" ry="37" fill="#ffe000"/></g>
<g filter="url(#b3)"><ellipse cx="503" cy="546" rx="26" ry="33" fill="#ff2010"/></g>
<g filter="url(#b3)"><ellipse cx="507" cy="561" rx="16" ry="14" fill="#ff1090"/></g>
<g filter="url(#b2)"><ellipse cx="512" cy="560" rx="6" ry="5" fill="#ff90e0"/></g>
<clipPath id="ellc"><ellipse cx="490" cy="547" rx="115" ry="102"/></clipPath>
<filter id="nz2" x="0" y="0" width="100%" height="100%"><feTurbulence type="fractalNoise" baseFrequency="0.9" numOctaves="1" seed="11"/><feColorMatrix values="0 0 0 0 0  0 0 0 0 0  0 0 0 0 0.1  0 0 0 1.6 -0.75"/></filter>
<g clip-path="url(#ellc)"><rect x="370" y="440" width="240" height="215" filter="url(#nz2)" opacity="0.35"/></g>
<!-- overlay -->
<line x1="1" y1="547" x2="948" y2="547" stroke="#e6e6e6" stroke-width="2"/>
<line x1="489" y1="250" x2="489" y2="925" stroke="#e6e6e6" stroke-width="2"/>
<ellipse cx="489" cy="547.5" rx="108" ry="95.5" fill="none" stroke="#f4f2dc" stroke-width="1.6"/>
</svg>
<!-- display overlay toolbar -->
<svg class="a" style="left:697px;top:250px" width="251" height="50" viewBox="697 250 251 50">
<defs>
<linearGradient id="ib" x1="0" y1="0" x2="0" y2="1"><stop offset="0" stop-color="#86a2b0"/><stop offset="0.38" stop-color="#3e6878"/><stop offset="0.42" stop-color="#0c3a4c"/><stop offset="0.75" stop-color="#021a26"/><stop offset="1" stop-color="#000408"/></linearGradient>
<linearGradient id="ib1" x1="0" y1="0" x2="0" y2="1"><stop offset="0" stop-color="#505860"/><stop offset="0.5" stop-color="#2a3a44"/><stop offset="1" stop-color="#082028"/></linearGradient>
<linearGradient id="ib5" x1="0" y1="0" x2="0" y2="1"><stop offset="0" stop-color="#4e5860"/><stop offset="0.45" stop-color="#2a3e48"/><stop offset="0.55" stop-color="#0c2c38"/><stop offset="1" stop-color="#06222c"/></linearGradient>
<radialGradient id="rbw" cx="0.5" cy="0.5" r="0.5"><stop offset="0" stop-color="#8a3a6a"/><stop offset="0.2" stop-color="#b83838"/><stop offset="0.4" stop-color="#a89a40"/><stop offset="0.58" stop-color="#4a9050"/><stop offset="0.75" stop-color="#4a80a0"/><stop offset="0.9" stop-color="#50508a"/><stop offset="1" stop-color="#303840" stop-opacity="0"/></radialGradient>
<linearGradient id="cam" x1="0" y1="0" x2="1" y2="1"><stop offset="0" stop-color="#fafafa"/><stop offset="1" stop-color="#a8a8a8"/></linearGradient>
<clipPath id="c1"><rect x="697" y="250" width="39" height="50"/></clipPath>
<clipPath id="c3"><rect x="795" y="250" width="41" height="50"/></clipPath>
<clipPath id="c4"><rect x="845" y="250" width="41" height="50"/></clipPath>
</defs>
<rect x="697" y="250" width="39" height="50" fill="url(#ib1)"/>
<g clip-path="url(#c1)"><circle cx="718" cy="277" r="24" fill="url(#rbw)"/><circle cx="718" cy="277" r="21" fill="none" stroke="#2a3038" stroke-width="1.5" opacity="0.5"/><path d="M723 251 V275.5 H698" fill="none" stroke="#062430" stroke-width="2.6"/><path d="M725 277 L736 283 L736 293 Z" fill="#9a9a9a"/></g>
<rect x="736" y="250" width="3" height="50" fill="#f2f4f6"/><rect x="739.5" y="250" width="3" height="50" fill="#061c26"/><rect x="743" y="250" width="2.5" height="50" fill="#f0f4f6"/>
<rect x="745.5" y="250" width="40.5" height="50" fill="url(#ib)"/>
<path d="M751 269 Q751 264 755 264 H762 L765 260 H778 L781 264 H786 V292 H755 Q751 292 751 288 Z" fill="url(#cam)"/>
<path d="M751 273.5 H786" stroke="#0c3444" stroke-width="2"/>
<circle cx="773.5" cy="278" r="8.5" fill="#062c3c"/><path d="M768.5 276 Q769.5 272 774 271" fill="none" stroke="#d8e8ee" stroke-width="1.3"/>
<rect x="786" y="250" width="3" height="50" fill="#f2f4f6"/><rect x="789.5" y="250" width="2.5" height="50" fill="#061c26"/><rect x="792" y="250" width="3" height="50" fill="#c8dce4"/>
<rect x="795" y="250" width="41" height="50" fill="url(#ib)"/>
<g clip-path="url(#c3)"><path d="M816.5 259 A16 19 0 0 0 820 294" fill="none" stroke="#fff" stroke-width="3.3"/><path d="M812 289.5 L826 296 L812 298.5 Z" fill="#fff"/><path d="M829.5 296.5 A16 19 0 0 0 836.5 292" fill="none" stroke="#fff" stroke-width="3.3"/><path d="M823 255.5 L836 252.5 L832 265 Z" fill="#fff"/><path d="M832 259 L829 262" stroke="#0c3a4c" stroke-width="1"/></g>
<rect x="836" y="250" width="9" height="50" fill="#fafbfc"/>
<rect x="845" y="250" width="41" height="50" fill="url(#ib)"/>
<g clip-path="url(#c4)"><ellipse cx="871" cy="274" rx="19" ry="13" transform="rotate(15 871 274)" fill="none" stroke="#fff" stroke-width="4.5"/></g>
<rect x="886" y="250" width="4" height="50" fill="#4a4e52"/><rect x="890" y="250" width="4" height="50" fill="#082430"/>
<rect x="894" y="250" width="54" height="50" fill="url(#ib5)"/>
<path d="M906 256 L931 281 L922 282 L928 296 L923 298 L917 284 L910 290 Z" fill="#8e8e90"/>
<rect x="932" y="287" width="10" height="10" fill="#8e8e90"/>
</svg>
<!-- bottom toolbar -->
<div class="a" style="left:1px;top:925px;width:947px;height:58px;background:linear-gradient(#eceff3 0px,#c8ccd4 7px,#a9adb5 7px,#a9adb5 8px,#fbfbfc 8px,#e2e5e8 27px,#c5c8cd 27px,#d8dadd 56px,#a9abb0 57px)"></div>
<div class="a" style="left:948px;top:213px;width:5px;height:770px;background:#cdd1d9"></div><div class="a" style="left:457px;top:928px;width:35px;height:2px;background:repeating-linear-gradient(90deg,#9aa0a6 0 2px,transparent 2px 4px)"></div><div class="a" style="left:458px;top:930px;width:35px;height:1px;background:repeating-linear-gradient(90deg,#fff 0 2px,transparent 2px 4px)"></div>
<svg class="a" style="left:648px;top:940px" width="52" height="44"><defs><radialGradient id="bc" cx="0.5" cy="0.8" r="0.55"><stop offset="0" stop-color="#30d0e0"/><stop offset="0.4" stop-color="#2040ff"/><stop offset="0.8" stop-color="#1010a0"/><stop offset="1" stop-color="#000"/></radialGradient><linearGradient id="bk" x1="0" y1="0" x2="0" y2="1"><stop offset="0" stop-color="#ff1020"/><stop offset="0.2" stop-color="#ff4010"/><stop offset="0.35" stop-color="#f0e000"/><stop offset="0.55" stop-color="#30c030"/><stop offset="0.8" stop-color="#20c0c0"/><stop offset="1" stop-color="#2040ff"/></linearGradient></defs><path d="M2 22 L15 14 L37 14 L50 22 V43 H2 Z" fill="#000"/><ellipse cx="26" cy="34" rx="22" ry="9" fill="url(#bc)"/><path d="M26 3 C23 4 21 20 13 35 Q26 41 39 35 C31 20 29 4 26 3 Z" fill="url(#bk)"/></svg>
<div class="a" style="left:704px;top:933px;width:63px;height:50px;background:linear-gradient(#ffd292,#ffb46a)"></div>
<svg class="a" style="left:704px;top:933px" width="63" height="50"><defs><radialGradient id="bt" cx="0.5" cy="0.5" r="0.5"><stop offset="0" stop-color="#e8c8e8"/><stop offset="0.1" stop-color="#e040b0"/><stop offset="0.22" stop-color="#f02020"/><stop offset="0.38" stop-color="#f8e000"/><stop offset="0.55" stop-color="#40d040"/><stop offset="0.72" stop-color="#30c0f0"/><stop offset="0.88" stop-color="#3070d0"/><stop offset="1" stop-color="#202a50"/></radialGradient></defs><circle cx="31.5" cy="33" r="24" fill="url(#bt)"/></svg>
<svg class="a" style="left:772px;top:943px" width="46" height="40"><rect width="46" height="40" fill="#000"/><path d="M0 8.5 H46 M0 20.5 H46 M0 32.5 H46 M8.5 0 V40 M20.5 0 V40 M32.5 0 V40 M43 0 V40" stroke="#2a90b0" stroke-width="1.5"/><path d="M5 40 Q13 20 17 6 Q19 1 22 1 Q25 1 27 6 Q31 20 39 40" fill="none" stroke="#fff" stroke-width="2.2"/></svg>
<svg class="a" style="left:834px;top:943px" width="45" height="40"><rect width="45" height="40" fill="#000"/><g fill="#28b0e8"><circle cx="8" cy="8" r="3.2"/><circle cx="17" cy="12" r="3.2"/><circle cx="12" cy="21" r="3.2"/><circle cx="22.5" cy="24" r="3.2"/><circle cx="29" cy="29" r="3.2"/><circle cx="40" cy="29" r="3.2"/><circle cx="19" cy="35" r="3.2"/><circle cx="5" cy="40" r="3.2"/></g><circle cx="32" cy="12.5" r="3.2" fill="#f0e010"/></svg>
<svg class="a" style="left:908px;top:955px" width="18" height="24"><path d="M2 2 L6 6 L2 10 M8 2 L12 6 L8 10" fill="none" stroke="#8a8a8a" stroke-width="1.6"/><path d="M3 15 H12 L7.5 20 Z" fill="#8a8a8a"/></svg>


<!-- right panel -->
<div class="a" style="left:953px;top:213px;width:967px;height:2px;background:#6e7074"></div>
<div class="a" style="left:953px;top:213px;width:2px;height:770px;background:#7c7f84"></div>
<div class="a" style="left:955px;top:215px;width:965px;height:37px;background:linear-gradient(#d6dae2,#e9ecf3)"></div>
<svg class="a" style="left:958px;top:224px" width="14" height="18"><path d="M9.5 1.5 V15.5 L2 8.5 Z" fill="none" stroke="#8a8a8a" stroke-width="1.5"/></svg>
<svg class="a" style="left:1896px;top:224px" width="14" height="18"><path d="M4.5 1.5 V15.5 L11.5 8.5 Z" fill="none" stroke="#8a8a8a" stroke-width="1.6"/></svg><div class="a" style="left:1918px;top:215px;width:2px;height:768px;background:#eef0f3"></div>
<svg class="a" style="left:975px;top:214px" width="800" height="40" viewBox="975 214 800 40">
<defs>
<linearGradient id="tdb" x1="0" y1="0" x2="0" y2="1"><stop offset="0" stop-color="#055e98"/><stop offset="1" stop-color="#03497e"/></linearGradient>
<linearGradient id="tcy" x1="0" y1="0" x2="0" y2="1"><stop offset="0" stop-color="#02cafa"/><stop offset="1" stop-color="#00a8e6"/></linearGradient>
</defs>
<path d="M978.5 252.5 L1014.5 216.5 H1117 V252.5 Z" fill="url(#tdb)"/>
<path d="M978.5 252.5 L1014.5 216.5" stroke="#f4f6f8" stroke-width="1.2"/><path d="M1014 216.5 H1117" stroke="#fff" stroke-width="1.2"/><path d="M980 252.3 H1089" stroke="#a8acb0" stroke-width="1"/>
<path d="M1117 216.5 H1124 L1117 223 Z" fill="#b8bcc4"/>
<path d="M1088.5 252.5 L1124 216.5 H1226.5 V252.5 Z" fill="url(#tcy)"/>
<path d="M1088.5 252.5 L1124 216.5 M1226.5 216.5 V252.5" stroke="#f4f8fa" stroke-width="1.3"/>
<rect x="1228" y="216.5" width="193" height="36" fill="url(#tdb)"/><path d="M1124 216.5 H1768.5" stroke="#fff" stroke-width="1.2"/><path d="M1227 252.3 H1768.5" stroke="#a8acb0" stroke-width="1"/>
<path d="M1228 216.5 H1235 L1228 223.5 Z" fill="#b8bcc4"/>
<rect x="1422.5" y="216.5" width="151" height="36" fill="url(#tdb)"/>
<path d="M1422.5 216.5 H1429.5 L1422.5 223.5 Z" fill="#b8bcc4"/>
<rect x="1574.5" y="216.5" width="194" height="36" fill="url(#tdb)"/>
<path d="M1574.5 216.5 H1581.5 L1574.5 223.5 Z" fill="#b8bcc4"/>
</svg>
<!-- tab icons -->
<svg class="a" style="left:1015px;top:219px" width="34" height="32"><path d="M7 5 H11 V10 L7 13 Z" fill="#d02030"/><path d="M4 16 V31 H29 V16 L16.5 5 Z" fill="#f2e6c8"/><path d="M1.5 17 L16.5 3.5 L31.5 17" fill="none" stroke="#e0203a" stroke-width="3.2" stroke-linejoin="round"/><rect x="12.5" y="18" width="8" height="13" fill="#a8682a"/><circle cx="19" cy="25" r="0.7" fill="#ffe08a"/><path d="M4 19 H7 M4 24 H7 M26 19 H29 M26 24 H29" stroke="#bbb09a" stroke-width="1.2"/></svg>
<div class="t" style="left:1057px;top:225px;color:#fff">Home</div>
<svg class="a" style="left:1118px;top:215px" width="40" height="40"><g fill="#e2e2e2"><circle cx="15" cy="16" r="9.5"/><g transform="translate(15 16)"><rect x="-2.5" y="-12" width="5" height="24"/><rect x="-2.5" y="-12" width="5" height="24" transform="rotate(45)"/><rect x="-2.5" y="-12" width="5" height="24" transform="rotate(90)"/><rect x="-2.5" y="-12" width="5" height="24" transform="rotate(135)"/></g><circle cx="27" cy="29" r="5"/><g transform="translate(27 29)"><rect x="-1.5" y="-6.5" width="3" height="13"/><rect x="-1.5" y="-6.5" width="3" height="13" transform="rotate(45)"/><rect x="-1.5" y="-6.5" width="3" height="13" transform="rotate(90)"/><rect x="-1.5" y="-6.5" width="3" height="13" transform="rotate(135)"/></g></g><circle cx="14.5" cy="15.5" r="3.2" fill="#000"/><circle cx="26.5" cy="29" r="1.6" fill="#000"/></svg>
<div class="t" style="left:1165px;top:225px;color:#000;font-weight:bold">Setup</div>
<svg class="a" style="left:1234px;top:219px" width="34" height="32"><rect x="2" y="10" width="28" height="6" rx="1" fill="url(#disk)"/><rect x="2" y="17" width="28" height="6" rx="1" fill="url(#disk)"/><rect x="2" y="24" width="28" height="6" rx="1" fill="url(#disk)"/><path d="M11 0 H20 V11 H27 L15.5 24 L4 11 H11 Z" fill="url(#darr)"/></svg>
<div class="t" style="left:1278px;top:225px;color:#fff">Data Acquisition</div>
<svg class="a" style="left:1434px;top:217px" width="24" height="34"><defs><linearGradient id="th" x1="0" y1="0" x2="1" y2="0"><stop offset="0" stop-color="#bdbdbd"/><stop offset="0.5" stop-color="#e8e8e8"/><stop offset="1" stop-color="#b8b8b8"/></linearGradient></defs><ellipse cx="12" cy="16" rx="7.2" ry="12.5" fill="none" stroke="url(#th)" stroke-width="3.6"/><path d="M6 15.5 H18" stroke="#d0d0d0" stroke-width="1.6"/></svg>
<div class="t" style="left:1472px;top:225px;color:#fff">Divergence</div>
<svg class="a" style="left:1580px;top:218px" width="34" height="34"><path d="M8 7 L25 25" stroke="#d8d8d8" stroke-width="2.5"/><circle cx="7" cy="6" r="5" fill="#d8d8d8"/><circle cx="25" cy="26" r="5" fill="#d8d8d8"/><path d="M22 18 L24 24 L18 22 Z" fill="#d8d8d8"/></svg>
<div class="t" style="left:1626px;top:225px;color:#fff">Relative Position</div>

<div class="a" style="left:955px;top:252px;width:963px;height:731px;background:linear-gradient(90deg,#00b2ee,#00d6fc)"></div>
<div class="a" style="left:959px;top:257px;width:955px;height:721px;background:#dfe2ea"></div>
<!-- scrollbar -->
<div class="a" style="left:1887px;top:257px;width:27px;height:721px;background:#f0f0f0;border-left:1px solid #fafafa"></div>
<div class="a" style="left:1890px;top:283px;width:23px;height:67px;background:#cdcdcd"></div>
<svg class="a" style="left:1893px;top:264px" width="16" height="14"><path d="M3 10.5 L8.5 5 L14 10.5" fill="none" stroke="#606060" stroke-width="3" stroke-linejoin="miter"/></svg>
<svg class="a" style="left:1893px;top:959px" width="16" height="14"><path d="M3 3.5 L8.5 9 L14 3.5" fill="none" stroke="#606060" stroke-width="3" stroke-linejoin="miter"/></svg>

<!-- group boxes -->
<style>
.gb{position:absolute;left:978px;width:890px;border:1px solid #0f5688}
.gt{position:absolute;font-size:20px;line-height:24px;color:#0d5286;background:#dfe2ea;padding:0 2px 0 0;white-space:nowrap}
.r{position:absolute;width:20px;height:20px;border-radius:50%;border:1px solid #333;background:#fff}
.r.on::after{content:"";position:absolute;left:4px;top:4px;width:10px;height:10px;border-radius:50%;background:#222}
.cb{position:absolute;width:20px;height:20px;border:1px solid #333;background:#fff}
.tx{position:absolute;font-size:20px;line-height:24px;color:#000;white-space:nowrap}
.gr{color:#8f8f8f}
.inp{position:absolute;border:1px solid #c8cacf;background:#e3e5eb}
</style>
<div class="gb" style="top:294px;height:97px"></div>
<div class="a" style="left:985px;top:280px;width:180px;height:30px;background:#dfe2ea"></div>
<svg class="a" style="left:984px;top:272px" width="44" height="44" viewBox="984 272 44 44"><defs><radialGradient id="lens" cx="0.45" cy="0.4" r="0.65"><stop offset="0" stop-color="#505050"/><stop offset="1" stop-color="#262626"/></radialGradient></defs><circle cx="1005" cy="293.8" r="15.5" fill="#1c1c1c"/><circle cx="1004.6" cy="293.4" r="13.4" fill="url(#lens)" stroke="#5a5a5a" stroke-width="0.6"/><circle cx="1004.6" cy="293.8" r="11" fill="#3a3a3c"/><path d="M999.5 285 L1005.5 291 M1010 285.5 L1007.5 292.5 M1014 296 L1007 295.5 M1009 303 L1004 297.5 M1000 303 L1002 296 M994.8 292.6 L1002 293" stroke="#1e1e1e" stroke-width="1.1"/><path d="M1002.5 291 L1006.5 291 L1008.3 294 L1006.5 297 L1002.5 297 L1000.7 294 Z" fill="#eceef2"/></svg>
<div class="gt" style="left:1029px;top:283px">Exposure Time</div>
<div class="r" style="left:1000px;top:340px"></div><div class="tx" style="left:1025px;top:338px">Auto</div>
<div class="r on" style="left:1182px;top:340px"></div><div class="tx" style="left:1207px;top:338px">Manual</div>
<div class="a" style="left:1341px;top:332px;width:85px;height:36px;border:1px solid #7f7f7f;background:#fff"></div>
<div class="tx" style="left:1349px;top:336px">0.16</div>
<div class="tx" style="left:1471px;top:338px">ms</div>

<div class="gb" style="top:411px;height:232px"></div>
<div class="a" style="left:985px;top:396px;width:210px;height:30px;background:#dfe2ea"></div>
<svg class="a" style="left:984px;top:390px" width="44" height="42" viewBox="984 390 44 42"><path d="M1005 395.3 L1008 405.6 L1006 405.6 L1006 409.8 L1010.2 409.8 L1010.2 407.9 L1020.6 410.8 L1010.2 413.8 L1010.2 411.8 L1006 411.8 L1006 416 L1008 416 L1005 426 L1002 416 L1004 416 L1004 411.8 L999.9 411.8 L999.9 413.8 L989.1 410.8 L999.9 407.9 L999.9 409.8 L1004 409.8 L1004 405.6 L1002 405.6 Z" fill="#000"/></svg>
<div class="gt" style="left:1029px;top:400px">Image Orientation</div>
<div class="tx" style="left:1000px;top:453px">Rotate:</div>
<div class="r" style="left:1000px;top:490px"></div><div class="tx" style="left:1025px;top:488px">0 degrees</div>
<div class="r" style="left:1182px;top:490px"></div><div class="tx" style="left:1207px;top:488px">90 degrees</div>
<div class="r" style="left:1000px;top:529px"></div><div class="tx" style="left:1025px;top:527px">180 degrees</div>
<div class="r on" style="left:1182px;top:529px"></div><div class="tx" style="left:1207px;top:527px">270 degrees</div>
<div class="tx" style="left:1000px;top:564px">Flip :</div>
<div class="cb" style="left:1000px;top:601px"></div><div class="tx" style="left:1025px;top:599px">Horizontally</div>
<svg class="a" style="left:1138px;top:590px" width="40" height="35" viewBox="1138 590 40 35"><path d="M1143.5 602 H1156 L1149.8 608.3 Z" fill="none" stroke="#000" stroke-width="1.1" stroke-linejoin="round"/><path d="M1149.8 608.3 L1156.3 614.7 H1143.2 Z" fill="#000" stroke="#000" stroke-width="0.8"/><path d="M1143 608.5 H1157.5" stroke="#000" stroke-width="1.1" stroke-dasharray="1.1 1"/><path d="M1157.5 602 Q1160.5 607.5 1158.3 613" fill="none" stroke="#222" stroke-width="1"/><path d="M1157 612 L1160 613.3 L1157.6 615.3 Z" fill="#000"/></svg>
<div class="cb" style="left:1182px;top:601px"></div><div class="tx" style="left:1207px;top:599px">Vertically</div>
<svg class="a" style="left:1292px;top:590px" width="30" height="32" viewBox="1292 590 30 32"><path d="M1300.4 600.2 V612.6 L1305.8 606.4 Z" fill="none" stroke="#000" stroke-width="1.1" stroke-linejoin="round"/><path d="M1305.8 606.4 L1312.6 600 V612.8 Z" fill="#000" stroke="#000" stroke-width="0.8"/><path d="M1306.4 599.3 V613" stroke="#000" stroke-width="1.1" stroke-dasharray="1.1 1"/><path d="M1300.3 598.6 Q1305.5 595.5 1311 597.6" fill="none" stroke="#222" stroke-width="1"/><path d="M1310 596.2 L1312.6 598 L1310.2 599.3 Z" fill="#000"/></svg>

<div class="gb" style="top:669px;height:82px"></div>
<div class="a" style="left:985px;top:652px;width:200px;height:34px;background:#dfe2ea"></div>
<svg class="a" style="left:988px;top:652px" width="36" height="36"><defs><radialGradient id="rb" cx="0.5" cy="0.5" r="0.5"><stop offset="0" stop-color="#f030a0"/><stop offset="0.25" stop-color="#ff2020"/><stop offset="0.45" stop-color="#f0e000"/><stop offset="0.65" stop-color="#20d040"/><stop offset="0.85" stop-color="#20a0f0"/><stop offset="1" stop-color="#2040a0"/></radialGradient></defs><rect x="14" y="1" width="17" height="17" fill="url(#rb)" stroke="#111" stroke-width="2"/><rect x="8" y="7" width="17" height="17" fill="url(#rb)" stroke="#111" stroke-width="2"/><rect x="2" y="15" width="17" height="17" fill="url(#rb)" stroke="#111" stroke-width="2"/></svg>
<div class="gt" style="left:1029px;top:658px">Image Averaging</div>
<div class="r on" style="left:1000px;top:706px"></div><div class="tx" style="left:1025px;top:704px">None</div>
<div class="r" style="left:1119px;top:706px"></div><div class="tx" style="left:1144px;top:704px">2</div>
<div class="r" style="left:1229px;top:706px"></div><div class="tx" style="left:1254px;top:704px">5</div>
<div class="r" style="left:1341px;top:706px"></div><div class="tx" style="left:1366px;top:704px">10</div>

<div class="gb" style="top:777px;height:210px;border-bottom:none"></div>
<div class="a" style="left:985px;top:760px;width:150px;height:34px;background:#dfe2ea"></div>
<svg class="a" style="left:988px;top:760px" width="36" height="36"><rect x="1.5" y="1.5" width="31" height="31" fill="#fff" stroke="#111" stroke-width="2"/><circle cx="17" cy="17" r="15" fill="url(#rb)"/><path d="M17 2 V17 H2" fill="none" stroke="#111" stroke-width="2"/><path d="M18 18 L29 29" stroke="#fff" stroke-width="2.5"/><path d="M30 30 L24 29 L29 24 Z" fill="#fff"/><path d="M2 26 L8 32 H2 Z M32 2 V8 L26 2 Z" fill="#fff"/></svg>
<div class="gt" style="left:1029px;top:766px">Active Area</div>
<div class="r" style="left:1000px;top:820px"></div><div class="tx" style="left:1025px;top:818px">128x128</div>
<div class="r" style="left:1182px;top:820px"></div><div class="tx" style="left:1207px;top:818px">256x256</div>
<div class="r" style="left:1341px;top:820px"></div><div class="tx" style="left:1366px;top:818px">Custom</div>
<div class="r" style="left:1000px;top:859px"></div><div class="tx" style="left:1025px;top:857px">512x512</div>
<div class="r" style="left:1182px;top:859px"></div><div class="tx" style="left:1207px;top:857px">768x768</div>
<div class="tx gr" style="left:1341px;top:857px">Width</div>
<div class="inp" style="left:1402px;top:852px;width:74px;height:34px"></div><div class="tx gr" style="left:1410px;top:854px">2048</div>
<div class="tx gr" style="left:1481px;top:857px">x</div>
<div class="tx gr" style="left:1503px;top:857px">Height</div>
<div class="inp" style="left:1570px;top:852px;width:76px;height:34px"></div><div class="tx gr" style="left:1578px;top:854px">2048</div>
<div class="r" style="left:1000px;top:898px"></div><div class="tx" style="left:1025px;top:896px">1024x1024</div>
<div class="r on" style="left:1182px;top:898px"></div><div class="tx" style="left:1207px;top:896px">2048x2048</div>
<div class="tx gr" style="left:1000px;top:944px">Left:</div>
<div class="inp" style="left:1058px;top:939px;width:61px;height:35px"></div><div class="tx gr" style="left:1066px;top:941px">0</div>
<div class="tx gr" style="left:1182px;top:944px">Top:</div>
<div class="inp" style="left:1234px;top:939px;width:61px;height:35px"></div><div class="tx gr" style="left:1242px;top:941px">0</div>
<div class="cb" style="left:1341px;top:946px"></div>
<svg class="a" style="left:1343px;top:948px" width="16" height="16"><path d="M2.5 8 L6.5 12.5 L14 3" fill="none" stroke="#222" stroke-width="1.6"/></svg>
<div class="tx" style="left:1366px;top:944px">Center</div>
<!-- bottom cyan over content -->
<div class="a" style="left:955px;top:978px;width:963px;height:4px;background:linear-gradient(90deg,#00b8f0,#00dcff)"></div>
<div class="a" style="left:953px;top:982px;width:967px;height:2px;background:#fff"></div>

<!-- status bar -->
<div class="a" style="left:0;top:983px;width:1920px;height:37px;background:linear-gradient(#a9abb0 0px,#a9abb0 2px,#e8eaee 2px,#d0d3d9 6px,#b6bac2 11px,#a9aeb5 12px,#adb1b8 30px,#b3b7bd 37px)"></div>
<div class="t" style="left:10px;top:992px;color:#1c2232;font-size:16px">Displays</div>
<div class="a" style="left:1830px;top:985px;width:1px;height:35px;background:#9a9ea5"></div><div class="a" style="left:1831px;top:985px;width:1px;height:35px;background:#eef0f2"></div>
<div class="t" style="left:1847px;top:992px;color:#1c2232">Controls</div>
</body></html>
